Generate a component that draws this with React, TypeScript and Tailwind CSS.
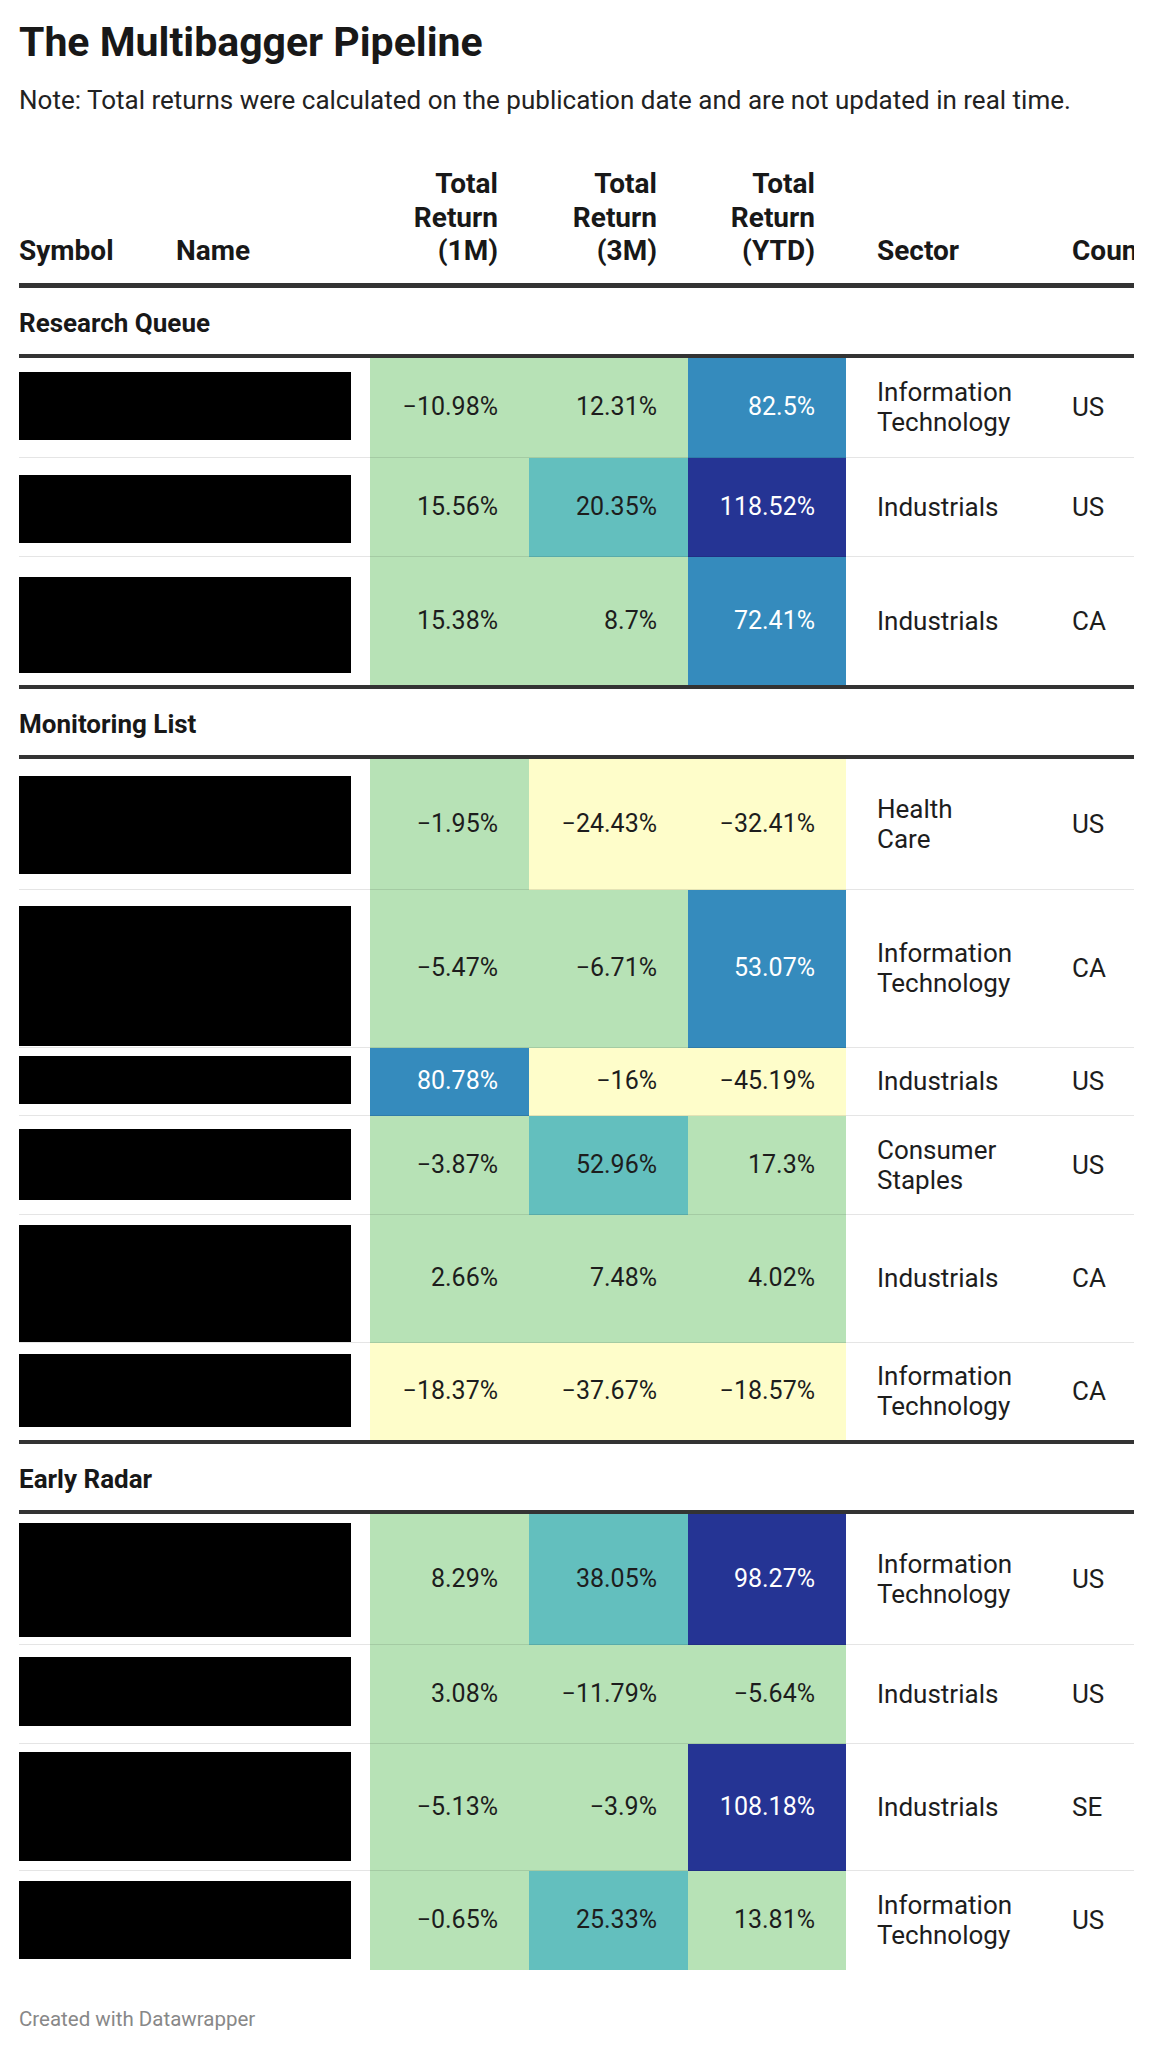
import React from "react";

type C = "G" | "Y" | "T" | "B" | "N";

const bg: Record<C, string> = {
  G: "bg-[#b7e2b6] text-[#1d1d1d]",
  Y: "bg-[#fefdca] text-[#1d1d1d]",
  T: "bg-[#63bfbe] text-[#1d1d1d]",
  B: "bg-[#358bbd] text-white",
  N: "bg-[#253494] text-white",
};

type Row = {
  h: number;
  bt: number;
  bh: number;
  v: [string, C][];
  sector: string[];
  country: string;
};

type Section = { label: string; rows: Row[] };

const sections: Section[] = [
  {
    label: "Research Queue",
    rows: [
      { h: 100, bt: 14, bh: 68, v: [["−10.98%", "G"], ["12.31%", "G"], ["82.5%", "B"]], sector: ["Information", "Technology"], country: "US" },
      { h: 99, bt: 17, bh: 68, v: [["15.56%", "G"], ["20.35%", "T"], ["118.52%", "N"]], sector: ["Industrials"], country: "US" },
      { h: 128, bt: 20, bh: 96, v: [["15.38%", "G"], ["8.7%", "G"], ["72.41%", "B"]], sector: ["Industrials"], country: "CA" },
    ],
  },
  {
    label: "Monitoring List",
    rows: [
      { h: 131, bt: 17, bh: 98, v: [["−1.95%", "G"], ["−24.43%", "Y"], ["−32.41%", "Y"]], sector: ["Health", "Care"], country: "US" },
      { h: 158, bt: 16, bh: 140, v: [["−5.47%", "G"], ["−6.71%", "G"], ["53.07%", "B"]], sector: ["Information", "Technology"], country: "CA" },
      { h: 68, bt: 8, bh: 48, v: [["80.78%", "B"], ["−16%", "Y"], ["−45.19%", "Y"]], sector: ["Industrials"], country: "US" },
      { h: 99, bt: 13, bh: 71, v: [["−3.87%", "G"], ["52.96%", "T"], ["17.3%", "G"]], sector: ["Consumer", "Staples"], country: "US" },
      { h: 128, bt: 10, bh: 117, v: [["2.66%", "G"], ["7.48%", "G"], ["4.02%", "G"]], sector: ["Industrials"], country: "CA" },
      { h: 97, bt: 11, bh: 73, v: [["−18.37%", "Y"], ["−37.67%", "Y"], ["−18.57%", "Y"]], sector: ["Information", "Technology"], country: "CA" },
    ],
  },
  {
    label: "Early Radar",
    rows: [
      { h: 131, bt: 9, bh: 114, v: [["8.29%", "G"], ["38.05%", "T"], ["98.27%", "N"]], sector: ["Information", "Technology"], country: "US" },
      { h: 99, bt: 12, bh: 69, v: [["3.08%", "G"], ["−11.79%", "G"], ["−5.64%", "G"]], sector: ["Industrials"], country: "US" },
      { h: 127, bt: 8, bh: 109, v: [["−5.13%", "G"], ["−3.9%", "G"], ["108.18%", "N"]], sector: ["Industrials"], country: "SE" },
      { h: 99, bt: 10, bh: 78, v: [["−0.65%", "G"], ["25.33%", "T"], ["13.81%", "G"]], sector: ["Information", "Technology"], country: "US" },
    ],
  },
];

const grid = "grid grid-cols-[157px_194px_159px_159px_158px_196px_200px]";

function DataRow({ r, last }: { r: Row; last: boolean }) {
  const line = last ? "" : "border-b border-[#0000001a]";
  return (
    <div className={grid} style={{ height: r.h }}>
      <div className={`col-span-2 ${line}`}>
        <div className="w-[332px] bg-black" style={{ marginTop: r.bt, height: r.bh }} />
      </div>
      {r.v.map(([val, c], i) => (
        <div key={i} className={`flex items-center justify-end pr-[31px] text-[25px] ${bg[c]} ${line}`}>
          {val}
        </div>
      ))}
      <div className={`flex flex-col justify-center pl-[31px] text-[26px] text-[#1d1d1d] ${line}`}>
        {r.sector.map((s) => (
          <div key={s}>{s}</div>
        ))}
      </div>
      <div className={`flex items-center pl-[30px] text-[26px] text-[#1d1d1d] ${line}`}>{r.country}</div>
    </div>
  );
}

export default function App() {
  return (
    <div className="w-[1153px] bg-white pl-[19px] pb-[40px] font-['Roboto',sans-serif]">
      <h1 className="pt-[17px] text-[41px] font-bold leading-[50px] text-[#181818]">The Multibagger Pipeline</h1>
      <p className="mt-[18px] text-[26px] leading-[30px] text-[#222]">
        Note: Total returns were calculated on the publication date and are not updated in real time.
      </p>
      <div className="mt-[52px] w-[1115px] overflow-hidden">
        <div className="w-[1223px] leading-[30px]">
          <div className={`${grid} items-end border-b-[5px] border-[#333] pb-[15px] text-[28px] font-bold leading-[33.6px] text-[#181818]`}>
            <div>Symbol</div>
            <div>Name</div>
            <div className="pr-[31px] text-right">Total<br />Return<br />(1M)</div>
            <div className="pr-[31px] text-right">Total<br />Return<br />(3M)</div>
            <div className="pr-[31px] text-right">Total<br />Return<br />(YTD)</div>
            <div className="pl-[31px]">Sector</div>
            <div className="pl-[30px]">Country</div>
          </div>
          {sections.map((s, si) => (
            <div key={s.label} className={si > 0 ? "border-t-[4px] border-[#333]" : ""}>
              <div className="border-b-[4px] border-[#333] pt-[20px] pb-[15px] text-[26px] font-bold leading-[31px] text-[#181818]">
                {s.label}
              </div>
              {s.rows.map((r, i) => (
                <DataRow key={i} r={r} last={i === s.rows.length - 1} />
              ))}
            </div>
          ))}
        </div>
      </div>
      <div className="mt-[37px] text-[20.5px] leading-[24px] text-[#888]">Created with Datawrapper</div>
    </div>
  );
}
